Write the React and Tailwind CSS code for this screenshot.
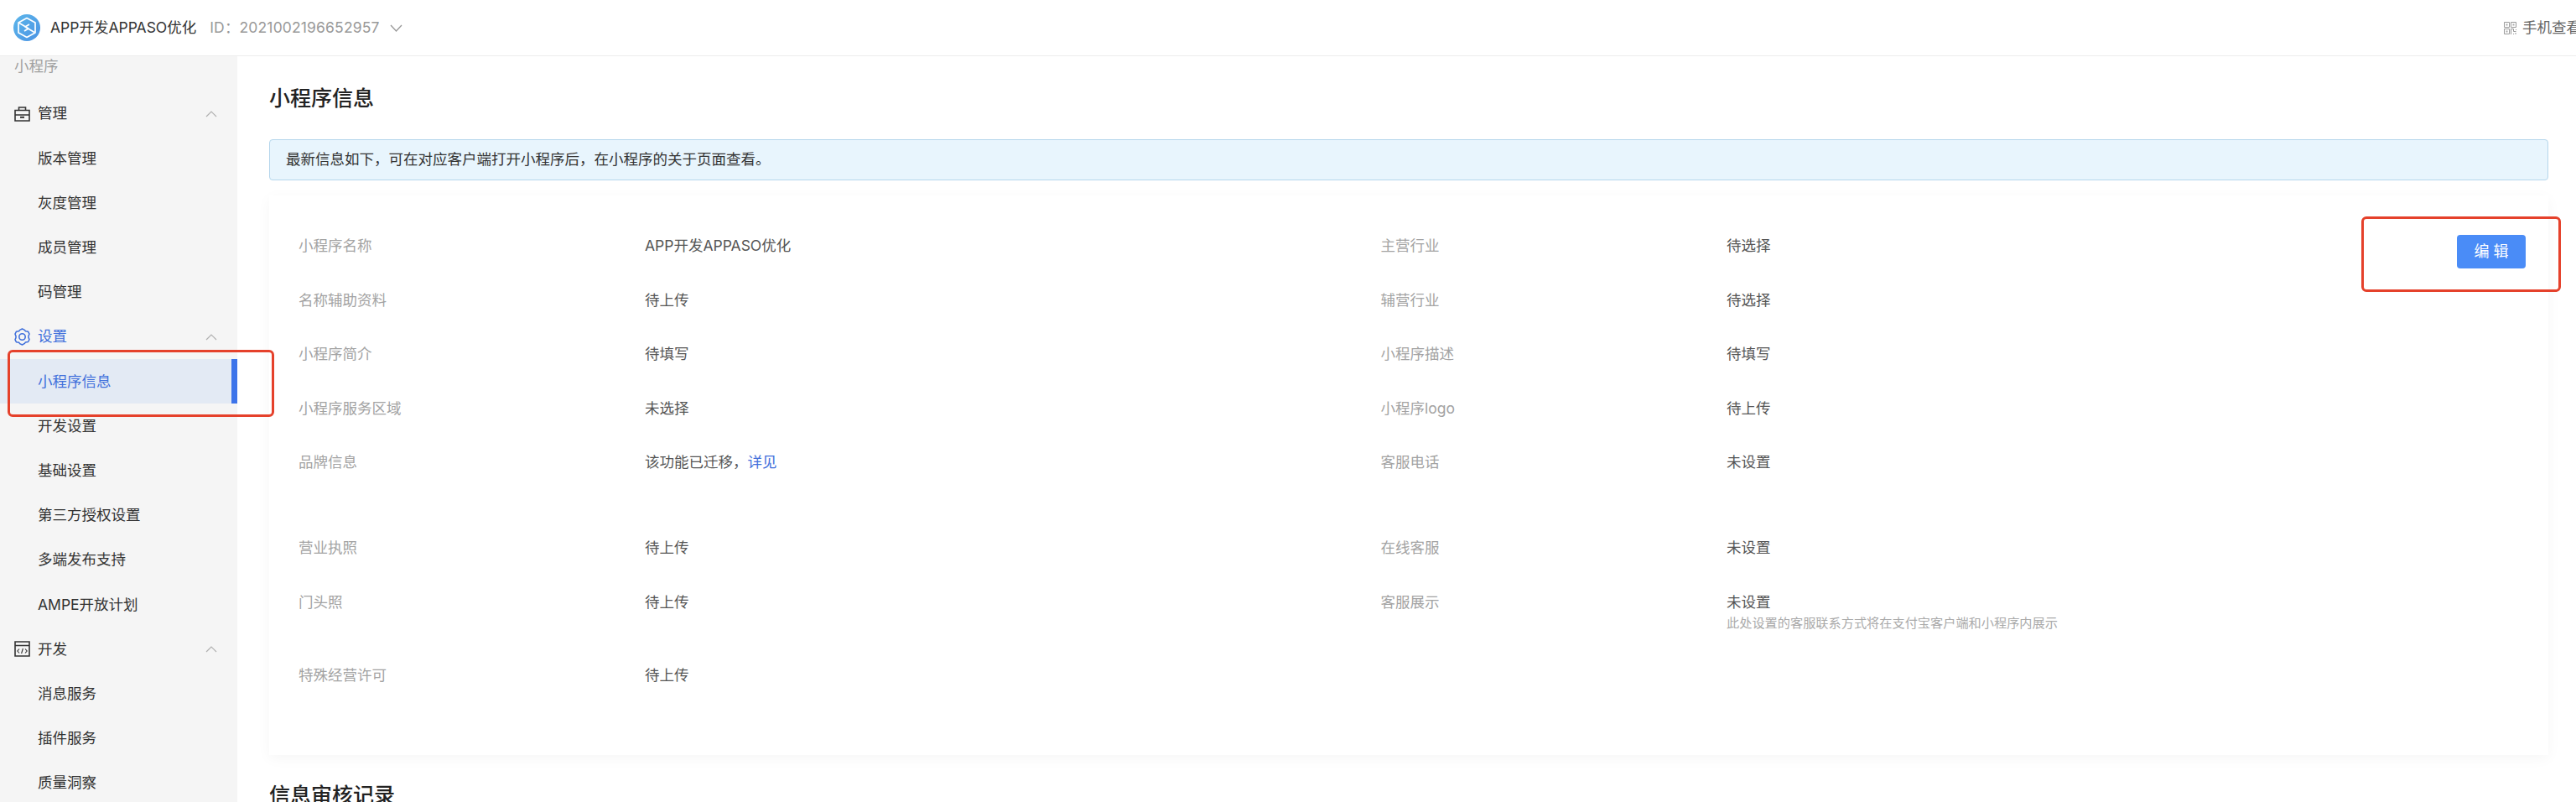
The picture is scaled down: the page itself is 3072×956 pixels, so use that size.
import React from 'react';

const FONT = "font-['Inter','Noto_Sans_CJK_SC',sans-serif]";

function Logo() {
  return (
    <svg width="32" height="32" viewBox="0 0 32 32" className="shrink-0">
      <defs>
        <linearGradient id="logoFill" x1="0" y1="0" x2="1" y2="1">
          <stop offset="0" stopColor="#5cb6ea" />
          <stop offset="1" stopColor="#4b93e4" />
        </linearGradient>
      </defs>
      <circle cx="16" cy="16" r="16" fill="url(#logoFill)" />
      <path d="M16 4.5 26 10v12l-10 5.5L6 22V10z" fill="none" stroke="#fff" strokeWidth="1.7" strokeLinejoin="round" />
      <path d="M7 10.5 18 17l-5 3M25 21.5 14 15l5-3" fill="none" stroke="#fff" strokeWidth="1.7" strokeLinejoin="round" />
    </svg>
  );
}

function ChevronDown() {
  return (
    <svg width="15" height="9" viewBox="0 0 15 9" className="shrink-0">
      <path d="M1 1l6.5 7L14 1" fill="none" stroke="#999" strokeWidth="1.3" />
    </svg>
  );
}

function ChevronUp() {
  return (
    <svg width="14" height="8" viewBox="0 0 14 8" className="shrink-0">
      <path d="M1 7l6-6 6 6" fill="none" stroke="#b0b0b0" strokeWidth="1.2" />
    </svg>
  );
}

function BoxIcon() {
  return (
    <svg width="19" height="18" viewBox="0 0 19 18" className="shrink-0">
      <path d="M5.5 4.5V1h8v3.5M1 4.5h17V17H1zM1 10h17" fill="none" stroke="#333" strokeWidth="1.6" />
      <path d="M7 12.8h5" stroke="#333" strokeWidth="2" />
    </svg>
  );
}

function GearIcon() {
  return (
    <svg width="19" height="21" viewBox="0 0 19 21" className="shrink-0">
      <path
        d="M6.6 2.4 9.5 1l2.9 1.4 1 1.4 3.2.5 1.4 2.9-1 2.2v2l1 2.2-1.4 2.9-3.2.5-1 1.4L9.5 20l-2.9-1.4-1-1.4-3.2-.5L1 13.8l1-2.2v-2L1 7.2l1.4-2.9 3.2-.5z"
        fill="none"
        stroke="#3f6fdb"
        strokeWidth="1.5"
        strokeLinejoin="round"
      />
      <circle cx="9.5" cy="10.5" r="3.7" fill="none" stroke="#3f6fdb" strokeWidth="1.6" />
    </svg>
  );
}

function CodeIcon() {
  return (
    <svg width="19" height="19" viewBox="0 0 19 19" className="shrink-0">
      <path d="M1 1h17v17H1zM1 5.5h17" fill="none" stroke="#333" strokeWidth="1.6" />
      <path d="M6 9.5l-2.2 2.5L6 14.5M13 9.5l2.2 2.5L13 14.5M10.4 9l-1.8 6" fill="none" stroke="#333" strokeWidth="1.1" />
    </svg>
  );
}

function QrIcon() {
  return (
    <svg width="15" height="15" viewBox="0 0 15 15" className="shrink-0">
      <path d="M.5.5h6v6h-6zM8.5.5h6v6h-6zM.5 8.5h6v6h-6z" fill="none" stroke="#999" />
      <path d="M2.5 2.5h2v2h-2zM10.5 2.5h2v2h-2zM2.5 10.5h2v2h-2z" fill="#aaa" />
      <path d="M8.5 15V8.5h3v3h3M14.5 9v1M11 14.5h1M14 13v2" fill="none" stroke="#999" />
    </svg>
  );
}

function NavGroup({ icon, label, active }) {
  return (
    <div className="flex h-[53.2px] items-center pl-[17px] pr-6">
      <span className="flex w-[28px] items-center">{icon}</span>
      <span className={active ? 'text-[#3f6fdb]' : 'text-[#333]'}>{label}</span>
      <span className="ml-auto">
        <ChevronUp />
      </span>
    </div>
  );
}

function NavItem({ label, active }) {
  if (active) {
    return (
      <div className="flex h-[53.2px] items-center border-r-[7px] border-[#3d74ea] bg-[#e3eaf4] pl-[45px] text-[#3f6fdb]">
        {label}
      </div>
    );
  }
  return <div className="flex h-[53.2px] items-center pl-[45px] text-[#333]">{label}</div>;
}

function Sidebar() {
  return (
    <aside className="h-[889px] w-[283px] shrink-0 overflow-hidden bg-[#f5f5f5] text-[17.5px]">
      <div className="mb-[18px] pl-[17px] leading-6 text-[#a0a0a0]">小程序</div>

      <NavGroup icon={<BoxIcon />} label="管理" />
      <NavItem label="版本管理" />
      <NavItem label="灰度管理" />
      <NavItem label="成员管理" />
      <NavItem label="码管理" />

      <NavGroup icon={<GearIcon />} label="设置" active />
      <NavItem label="小程序信息" active />
      <NavItem label="开发设置" />
      <NavItem label="基础设置" />
      <NavItem label="第三方授权设置" />
      <NavItem label="多端发布支持" />
      <NavItem label="AMPE开放计划" />

      <NavGroup icon={<CodeIcon />} label="开发" />
      <NavItem label="消息服务" />
      <NavItem label="插件服务" />
      <NavItem label="质量洞察" />
    </aside>
  );
}

const ROWS = [
  { h: 'h-[64.5px]', left: ['小程序名称', 'APP开发APPASO优化'], right: ['主营行业', '待选择'] },
  { h: 'h-[64.5px]', left: ['名称辅助资料', '待上传'], right: ['辅营行业', '待选择'] },
  { h: 'h-[64.5px]', left: ['小程序简介', '待填写'], right: ['小程序描述', '待填写'] },
  { h: 'h-[64.5px]', left: ['小程序服务区域', '未选择'], right: ['小程序logo', '待上传'] },
  {
    h: 'h-[102px]',
    left: [
      '品牌信息',
      <>
        该功能已迁移&#xFF0C;<span className="text-[#3f6fdb]">详见</span>
      </>,
    ],
    right: ['客服电话', '未设置'],
  },
  { h: 'h-[64.5px]', left: ['营业执照', '待上传'], right: ['在线客服', '未设置'] },
  {
    h: 'h-[87.5px]',
    left: ['门头照', '待上传'],
    right: ['客服展示', '未设置'],
    hint: '此处设置的客服联系方式将在支付宝客户端和小程序内展示',
  },
  { h: 'h-[64.5px]', left: ['特殊经营许可', '待上传'] },
];

function InfoCard() {
  return (
    <section className="mt-[18px] flex h-[667px] bg-white pl-[35px] pr-[27px] pt-[47px] leading-6 shadow-[0_4px_16px_rgba(0,0,0,0.04)]">
      <div className="flex-1 pt-px">
        {ROWS.map((row, i) => (
          <div key={i} className={`flex items-start ${row.h}`}>
            <div className="w-[413px] shrink-0 text-[#a3a3a3]">{row.left[0]}</div>
            <div className="w-[877.5px] shrink-0 text-[#555]">{row.left[1]}</div>
            {row.right && <div className="w-[412.5px] shrink-0 text-[#a3a3a3]">{row.right[0]}</div>}
            {row.right && (
              <div className="text-[#555]">
                {row.right[1]}
                {row.hint && (
                  <div className="mt-[3px] whitespace-nowrap text-[15.2px] leading-5 text-[#aaa]">{row.hint}</div>
                )}
              </div>
            )}
          </div>
        ))}
      </div>
      <button className="h-10 w-[82px] shrink-0 rounded-[4px] bg-[#4a8cf7] text-[18px] text-white">编 辑</button>
    </section>
  );
}

export default function App() {
  return (
    <div className={`relative flex h-[956px] w-[3072px] flex-col overflow-hidden bg-white text-[17.5px] ${FONT}`}>
      {/* Top bar */}
      <header className="flex h-[67px] shrink-0 items-center border-b border-[#ececec] pl-4">
        <Logo />
        <span className="ml-3 text-[#333]">APP开发APPASO优化</span>
        <span className="ml-4 tracking-[0.15px] text-[#999]">ID&#xFF1A;2021002196652957</span>
        <span className="ml-3">
          <ChevronDown />
        </span>
        <div className="ml-auto flex shrink-0 translate-x-[6px] items-center gap-[7px] text-[#666]">
          <QrIcon />
          <span className="whitespace-nowrap">手机查看</span>
        </div>
      </header>

      <div className="flex flex-1">
        <Sidebar />

        {/* Main content */}
        <main className="flex-1 pl-[38px] pr-[33px] pt-[33px]">
          <h1 className="text-[25px] font-medium leading-[34px] text-[#222]">小程序信息</h1>
          <div className="mt-[32px] flex h-[49px] items-center rounded-[4px] border border-[#b5d6ec] bg-[#e8f5fd] pl-[19px] text-[#333]">
            最新信息如下&#xFF0C;可在对应客户端打开小程序后&#xFF0C;在小程序的关于页面查看&#x3002;
          </div>
          <InfoCard />
          <h2 className="mt-[31px] text-[25px] font-medium leading-[34px] text-[#222]">信息审核记录</h2>
        </main>
      </div>

      {/* Red annotation boxes drawn over the screenshot */}
      <div className="absolute left-[9px] top-[417px] h-[80px] w-[318px] rounded-[6px] border-[3px] border-[#e5412b]" />
      <div className="absolute left-[2816px] top-[258px] h-[90px] w-[238px] rounded-[6px] border-[3px] border-[#e5412b]" />
    </div>
  );
}
